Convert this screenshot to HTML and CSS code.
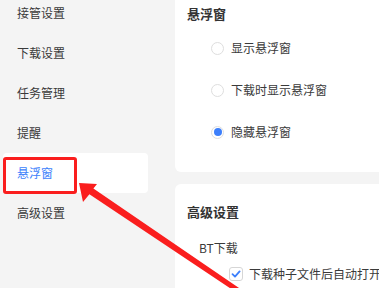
FILE: index.html
```html
<!DOCTYPE html>
<html lang="zh-CN">
<head>
<meta charset="utf-8">
<title>设置</title>
<link rel="stylesheet" href="styles.css">
</head>
<body>
<div class="app">
  <nav class="sidebar">
    <ul class="menu">
      <li class="menu-item">接管设置</li>
      <li class="menu-item">下载设置</li>
      <li class="menu-item">任务管理</li>
      <li class="menu-item">提醒</li>
      <li class="menu-item active">悬浮窗</li>
      <li class="menu-item">高级设置</li>
    </ul>
  </nav>
  <main class="content">
    <section class="card card-float">
      <h2 class="card-title">悬浮窗</h2>
      <ul class="radio-list">
        <li class="radio-row"><span class="radio"></span><span class="label">显示悬浮窗</span></li>
        <li class="radio-row"><span class="radio"></span><span class="label">下载时显示悬浮窗</span></li>
        <li class="radio-row"><span class="radio checked"></span><span class="label">隐藏悬浮窗</span></li>
      </ul>
    </section>
    <section class="card card-advanced">
      <h2 class="card-title">高级设置</h2>
      <div class="group-title">BT下载</div>
      <div class="check-row">
        <span class="checkbox"><svg viewBox="0 0 14 14" width="14" height="14"><path d="M3.5 7.2 L6 9.6 L10.6 4.4" fill="none" stroke="#3d7ffb" stroke-width="1.8" stroke-linecap="round" stroke-linejoin="round"/></svg></span>
        <span class="label">下载种子文件后自动打开</span>
      </div>
    </section>
  </main>
  <div class="highlight"></div>
  <svg class="arrow" viewBox="0 0 379 288" width="379" height="288">
    <polygon points="79,183 97,184 93.4,188.5 246.2,292.9 243.4,297.1 89.4,194.3 83,202" fill="#fa1e1e"/>
  </svg>
</div>
</body>
</html>
```
FILE: styles.css
```css
* { box-sizing: border-box; }
html, body { margin: 0; padding: 0; }
body {
  width: 379px;
  height: 288px;
  overflow: hidden;
  background: #f4f4f4;
  font-family: "Noto Sans CJK SC", "Noto Sans", "Liberation Sans", sans-serif;
  font-size: 12px;
  color: #333;
}
.app {
  position: relative;
  display: flex;
  width: 379px;
  height: 288px;
  overflow: hidden;
}
.sidebar {
  width: 175px;
  flex-shrink: 0;
  background: #f4f4f4;
}
.menu {
  list-style: none;
  margin: -7px 0 0 0;
  padding: 0;
}
.menu-item {
  height: 40px;
  line-height: 40px;
  margin-left: 3px;
  width: 145px;
  padding-left: 14px;
  color: #3a3a3a;
  border-radius: 4px;
}
.menu-item.active {
  background: #fff;
  color: #3d7ffb;
}
.content {
  display: flex;
  flex-direction: column;
  gap: 12px;
  flex-shrink: 0;
  width: 330px;
}
.card {
  background: #fff;
  border-radius: 6px;
  width: 330px;
  padding-left: 12px;
}
.card-float {
  margin-top: -10px;
  padding-top: 14px;
  padding-bottom: 19px;
}
.card-advanced {
  padding-top: 18px;
  padding-bottom: 20px;
}
.card-title {
  margin: 0;
  font-size: 13px;
  font-weight: bold;
  line-height: 20px;
  color: #333;
}
.radio-list {
  list-style: none;
  margin: 3px 0 0 0;
  padding: 0 0 0 24px;
}
.radio-row {
  display: flex;
  align-items: center;
  gap: 7px;
  height: 42px;
}
.radio {
  width: 13px;
  height: 13px;
  border-radius: 50%;
  border: 1px solid #dedede;
  background: #fff;
  display: flex;
  align-items: center;
  justify-content: center;
}
.radio.checked::after {
  content: "";
  width: 8px;
  height: 8px;
  border-radius: 50%;
  background: #3d7ffb;
}
.label {
  color: #3a3a3a;
  white-space: nowrap;
  line-height: 20px;
}
.group-title {
  margin-top: 16px;
  padding-left: 12px;
  line-height: 20px;
  color: #3a3a3a;
}
.check-row {
  display: flex;
  align-items: center;
  gap: 6px;
  margin-top: 6px;
  padding-left: 42px;
  height: 20px;
  white-space: nowrap;
}
.checkbox {
  width: 14px;
  height: 14px;
  border: 1px solid #d6d6d6;
  border-radius: 3px;
  background: #fff;
  display: flex;
  align-items: center;
  justify-content: center;
  flex-shrink: 0;
}
.checkbox svg { display: block; margin: -1px; }
.highlight {
  position: absolute;
  left: 3px;
  top: 157px;
  width: 74px;
  height: 37px;
  border: 3px solid #fa1e1e;
  border-radius: 3px;
}
.arrow {
  position: absolute;
  left: 0;
  top: 0;
  pointer-events: none;
}
```
